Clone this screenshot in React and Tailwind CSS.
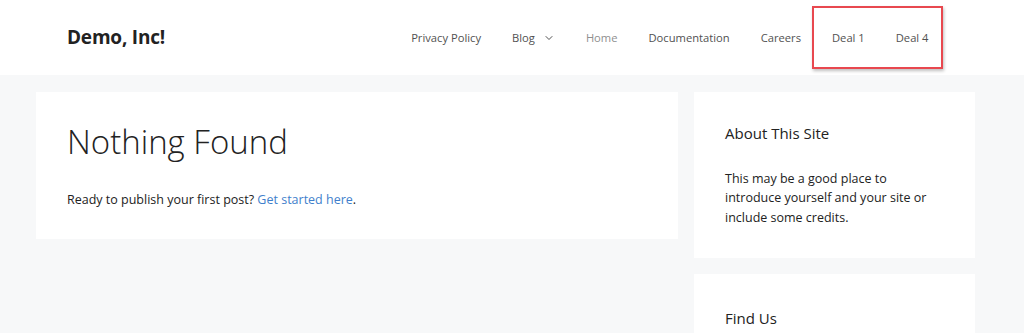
import { ChevronDown } from 'lucide-react'

const NAV = [
  { label: 'Privacy Policy' },
  { label: 'Blog', caret: true },
  { label: 'Home', current: true },
  { label: 'Documentation' },
  { label: 'Careers' },
  { label: 'Deal 1' },
  { label: 'Deal 4' },
]

export default function App() {
  return (
    <div className="min-h-[333px] bg-[#f7f8f9] text-[#222] font-['Open_Sans',sans-serif] overflow-hidden">
      {/* Header */}
      <header className="relative h-[75px] bg-white flex items-center justify-between pl-[67px] pr-[80px]">
        <div className="text-[19px] font-bold tracking-[-0.2px] text-[#222]">Demo, Inc!</div>
        <nav className="flex items-center text-[11.2px] text-[#515151]">
          {NAV.map((n) => (
            <a
              key={n.label}
              className={`flex items-center px-[15.5px] leading-[75px] ${n.current ? 'text-[#8f8f8f]' : ''}`}
            >
              {n.label}
              {n.caret && <ChevronDown size={12} strokeWidth={2} className="ml-[8px]" />}
            </a>
          ))}
        </nav>
        {/* annotation box */}
        <div className="absolute left-[812px] top-[6px] w-[131px] h-[63px] border-2 border-[#e8484f] shadow-[1px_2px_3px_rgba(0,0,0,0.25)]" />
      </header>

      {/* Content */}
      <div className="flex gap-[16px] px-[36px] pt-[17px] pr-[48px]">
        <main className="w-[642px] h-[147px] bg-white px-[31px] pt-[30px]">
          <h1 className="text-[33px] font-light leading-[1.2] text-[#222]">Nothing Found</h1>
          <p className="mt-[29px] text-[12.5px] text-[#222]">
            Ready to publish your first post? <a className="text-[#3f7fcc]">Get started here</a>.
          </p>
        </main>
        <aside className="w-[281px] flex flex-col gap-[16px]">
          <section className="h-[166px] bg-white px-[31px] pt-[32px]">
            <h2 className="text-[15px] leading-[1.3] text-[#222]">About This Site</h2>
            <p className="mt-[25px] text-[12.5px] leading-[19.5px] text-[#222]">
              This may be a good place to introduce yourself and your site or include some credits.
            </p>
          </section>
          <section className="h-[80px] bg-white px-[31px] pt-[35px]">
            <h2 className="text-[15px] leading-[1.3] text-[#222]">Find Us</h2>
          </section>
        </aside>
      </div>
    </div>
  )
}
